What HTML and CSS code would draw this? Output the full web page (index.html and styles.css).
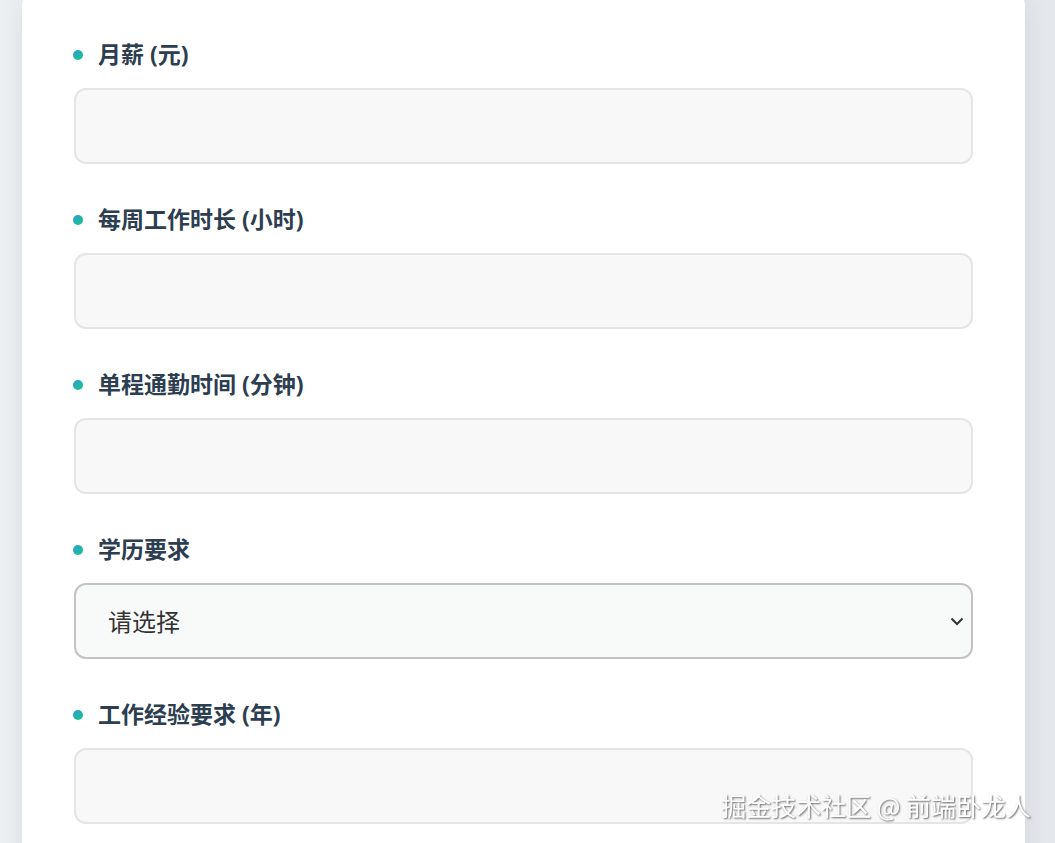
FILE: index.html
```html
<!DOCTYPE html>
<html lang="zh-CN">
<head>
<meta charset="UTF-8">
<meta name="viewport" content="width=device-width, initial-scale=1.0">
<title>工作性价比计算器</title>
<link rel="stylesheet" href="styles.css">
</head>
<body>
<div class="card">
  <div class="form-group">
    <label class="label" for="salary"><span class="dot"></span>月薪 (元)</label>
    <input type="number" id="salary" class="field">
  </div>
  <div class="form-group">
    <label class="label" for="hours"><span class="dot"></span>每周工作时长 (小时)</label>
    <input type="number" id="hours" class="field">
  </div>
  <div class="form-group">
    <label class="label" for="commute"><span class="dot"></span>单程通勤时间 (分钟)</label>
    <input type="number" id="commute" class="field">
  </div>
  <div class="form-group">
    <label class="label" for="edu"><span class="dot"></span>学历要求</label>
    <div class="select-wrap">
      <select id="edu" class="field select">
        <option>请选择</option>
        <option>大专</option>
        <option>本科</option>
        <option>硕士</option>
        <option>博士</option>
      </select>
      <svg class="chevron" width="14" height="9" viewBox="0 0 14 9"><path d="M1.5 1.5 L7 7 L12.5 1.5" fill="none" stroke="#333" stroke-width="2"/></svg>
    </div>
  </div>
  <div class="form-group">
    <label class="label" for="exp"><span class="dot"></span>工作经验要求 (年)</label>
    <input type="number" id="exp" class="field">
  </div>
</div>
<div class="watermark">掘金技术社区 @ 前端卧龙人</div>
</body>
</html>
```
FILE: styles.css
```css
body {
  margin: 0;
  background: linear-gradient(90deg, #edf0f3 0%, #e4e8ed 100%);
  font-family: "Noto Sans", "Noto Sans CJK SC", sans-serif;
  overflow: hidden;
}

.card {
  width: 1003px;
  margin: -14px 0 0 22px;
  padding: 52px 52px 40px;
  box-sizing: border-box;
  background-color: #fff;
  border-radius: 20px;
  box-shadow: 0 8px 30px rgba(0, 0, 0, 0.08);
}

.form-group {
  margin-bottom: 39px;
}

.label {
  display: flex;
  align-items: center;
  gap: 15px;
  height: 30px;
  margin-bottom: 20px;
  font-size: 23px;
  font-weight: 700;
  color: #2c3e50;
}

.dot {
  width: 10px;
  height: 10px;
  border-radius: 50%;
  margin: 4px 0 0 -1px;
  background: linear-gradient(135deg, #3498db, #1abc9c 70%);
}

.field {
  display: block;
  width: 100%;
  height: 76px;
  box-sizing: border-box;
  padding: 0 32px;
  border: 2px solid #e5e5e5;
  border-radius: 12px;
  background-color: #f8f8f8;
  font-family: "Noto Sans", "Noto Sans CJK SC", sans-serif;
  font-size: 24px;
  color: #333;
  outline: none;
}

.select-wrap {
  position: relative;
}

.select {
  appearance: none;
  -webkit-appearance: none;
  border-color: #c3c3c3;
  background-color: #f8f9f9;
}

.chevron {
  position: absolute;
  right: 9px;
  top: 34px;
  pointer-events: none;
}

.watermark {
  position: fixed;
  right: 24px;
  bottom: 20px;
  font-family: "Noto Sans CJK SC", sans-serif;
  font-size: 25px;
  color: #fff;
  text-shadow: 1px 1px 2px rgba(0, 0, 0, 0.6);
}
```
